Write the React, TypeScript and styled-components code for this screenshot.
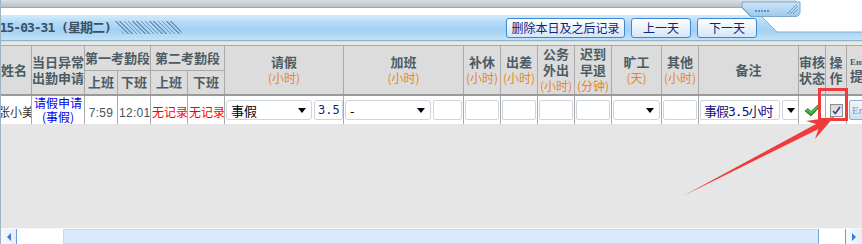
import React from 'react';
import styled, { createGlobalStyle } from 'styled-components';

const GlobalStyle = createGlobalStyle`
  html, body { margin: 0; padding: 0; background: #e6e6e6; }
  body { font-family: "Noto Sans CJK SC", "Noto Sans", sans-serif; }
  * { box-sizing: border-box; }
`;

const Frame = styled.div`
  position: relative;
  width: 862px;
  height: 244px;
  overflow: hidden;
  display: flex;
  flex-direction: column;
  background: #e6e6e6;
  border-left: 1px solid #9fb3c4;
`;

const Chrome = styled.div`
  height: 8px;
  flex: none;
  background: #fff;
  display: flex;
`;

const ChromeBar = styled.div`
  width: 797px;
  height: 8px;
  background: linear-gradient(#d9e0e5, #b6c2cb);
  border-bottom: 1px solid #98aab8;
  border-bottom-right-radius: 6px;
`;

const WhiteStrip = styled.div`
  height: 7px;
  flex: none;
  background: #fff;
`;

const TitleBar = styled.div`
  height: 26px;
  flex: none;
  display: flex;
  align-items: center;
  overflow: hidden;
  background: linear-gradient(#d3ebfb 0%, #b3dbf7 30%, #a4d0f2 60%, #c2e2f9 100%);
  border-bottom: 1px solid #8fb2cc;
  padding-right: 105px;
`;

const Title = styled.div`
  margin-left: -15px;
  font-size: 13px;
  font-weight: bold;
  line-height: 16px;
  color: #3b5063;
  white-space: nowrap;
  font-family: "DejaVu Sans Mono", "Noto Sans CJK SC", monospace;
  letter-spacing: -1px;
`;

const Hatch = styled.div`
  width: 68px;
  height: 13px;
  margin-left: 4px;
  background: repeating-linear-gradient(45deg, #6e97bb 0 1px, transparent 1px 3px);
  clip-path: polygon(0 0, 88% 0, 100% 100%, 12% 100%);
`;

const ButtonGroup = styled.div`
  margin-left: auto;
  display: flex;
  gap: 6px;
`;

const Btn = styled.button<{ $w: number }>`
  width: ${p => p.$w}px;
  height: 20px;
  padding: 0;
  border: 1px solid #3d88d2;
  border-radius: 3px;
  background: linear-gradient(#ffffff, #d3e6f7);
  color: #12237a;
  font-family: "Noto Sans CJK SC", sans-serif;
  font-size: 12px;
  line-height: 18px;
  white-space: nowrap;
`;

const Band = styled.div`
  height: 4px;
  flex: none;
  background: #e8e8e2;
  border-top: 1px solid #d4dadd;
`;

const TableArea = styled.div`
  flex: none;
  overflow: hidden;
  background: #e6e6e6;
`;

const Grid = styled.table`
  border-collapse: collapse;
  table-layout: fixed;
  width: 910px;
  margin-left: -5px;
`;

const HeadCell = styled.th<{ $h?: number }>`
  padding: 0;
  height: ${p => p.$h ?? 24}px;
  background: #dcdcdc;
  border: 1px solid #a9a9a9;
  color: #4c5c64;
  font-size: 13px;
  font-weight: bold;
  line-height: 16px;
  text-align: center;
  vertical-align: middle;
  overflow: hidden;
`;

const EmHead = styled(HeadCell)`
  text-align: left;
  padding-left: 3px;
`;

const EmSmall = styled.div`
  font-family: "Liberation Serif", serif;
  font-size: 9px;
  line-height: 12px;
  white-space: nowrap;
`;

const Unit = styled.div`
  color: #e8861c;
  font-weight: normal;
  font-size: 12px;
  line-height: 16px;
  white-space: nowrap;
`;

const HeadBottomRow = styled.tr`
  border-bottom: 2px solid #9a9a9a;
`;

const Cell = styled.td`
  padding: 0 1px;
  height: 28px;
  background: #fff;
  border-right: 1px solid #a9a9a9;
  border-left: 1px solid #a9a9a9;
  text-align: center;
  vertical-align: middle;
  overflow: hidden;
  white-space: nowrap;
`;

const NameCell = styled(Cell)`
  text-align: right;
  padding-right: 0;
`;

const Name = styled.span`
  font-size: 12px;
  color: #333;
`;

const Link = styled.a`
  display: block;
  color: #0000ee;
  font-size: 12px;
  line-height: 14px;
  text-decoration: none;
  white-space: normal;
`;

const Time = styled.span`
  font-family: "Liberation Sans", sans-serif;
  font-size: 12px;
  letter-spacing: 0.3px;
  color: #435561;
`;

const Missing = styled.span`
  font-size: 12px;
  color: #ff0000;
`;

const Wrap = styled.div<{ $justify?: string }>`
  display: flex;
  align-items: center;
  justify-content: ${p => p.$justify ?? 'center'};
  gap: 2px;
`;

const SelectBox = styled.div<{ $w: number }>`
  width: ${p => p.$w}px;
  height: 20px;
  flex: none;
  border: 1px solid #cdd5de;
  border-radius: 3px;
  background: #fff;
  display: flex;
  align-items: center;
  justify-content: space-between;
  padding: 0 5px 0 4px;
  font-size: 13px;
  color: #000;
`;

const Caret = styled.span`
  width: 0;
  height: 0;
  border-left: 4px solid transparent;
  border-right: 4px solid transparent;
  border-top: 5px solid #000;
  margin-left: auto;
`;

const Field = styled.input<{ $w: number }>`
  width: ${p => p.$w}px;
  height: 20px;
  flex: none;
  border: 1px solid #cdd5de;
  border-radius: 2px;
  background: #fff;
  padding: 0 3px;
  font-family: "DejaVu Sans Mono", monospace;
  font-size: 12px;
  color: #1a1a80;
  text-align: center;
  outline: none;
`;

const NoteField = styled(Field)`
  font-family: "DejaVu Sans Mono", "Noto Sans CJK SC", monospace;
  font-size: 13px;
  letter-spacing: -1px;
  text-align: left;
  color: #101080;
`;

const CaretBtn = styled.div`
  width: 17px;
  height: 20px;
  flex: none;
  border: 1px solid #cdd5de;
  border-radius: 2px;
  background: #fff;
  display: flex;
  align-items: center;
  justify-content: center;
`;

const CheckBox = styled.span`
  width: 13px;
  height: 13px;
  border: 1px solid #8e8e8e;
  background: linear-gradient(#d8d8d8, #f0f0f0);
  display: inline-flex;
  align-items: center;
  justify-content: center;
`;

const EmButton = styled.div`
  width: 40px;
  height: 20px;
  margin-left: 1px;
  border: 1px solid #8eb0d0;
  border-radius: 2px;
  background: linear-gradient(#f0f6fc, #cfe0f2);
  color: #9a9a9a;
  font-family: "Liberation Serif", serif;
  font-size: 11px;
  line-height: 18px;
  padding-left: 2px;
  text-align: left;
`;

const Filler = styled.div`
  flex: 1;
  background: #e6e6e6;
`;

const ScrollBar = styled.div`
  height: 16px;
  flex: none;
  display: flex;
  background: #fff;
  border-top: 1px solid #f4f8fc;
`;

const ScrollBtn = styled.div<{ $side: 'left' | 'right' }>`
  width: ${p => (p.$side === 'left' ? 16 : 17)}px;
  flex: none;
  display: flex;
  align-items: center;
  justify-content: center;
  background: linear-gradient(90deg, #f6f9fd, #e3eefa);
  ${p => (p.$side === 'left' ? 'border-right: 1px solid #6f9bd8;' : 'border-left: 1px solid #6f9bd8;')}
`;

const Tri = styled.span<{ $dir: 'left' | 'right' }>`
  width: 0;
  height: 0;
  border-top: 4px solid transparent;
  border-bottom: 4px solid transparent;
  ${p => (p.$dir === 'left' ? 'border-right: 4px solid #3d7ad0;' : 'border-left: 4px solid #3d7ad0;')}
`;

const Track = styled.div`
  flex: 1;
  display: flex;
  padding-left: 46px;
  padding-right: 26px;
`;

const Thumb = styled.div`
  flex: 1;
  background: #dae9fb;
  border: 1px solid #c3d9f1;
  border-right-color: #7aa6de;
`;

const Decoration = styled.svg`
  position: absolute;
  right: 0;
  top: 0;
  pointer-events: none;
`;

const Highlight = styled.div`
  position: absolute;
  left: 817px;
  top: 88px;
  width: 30px;
  height: 33px;
  border: 3px solid #ef3b3b;
  pointer-events: none;
`;

const ArrowLayer = styled.svg`
  position: absolute;
  left: -1px;
  top: 0;
  pointer-events: none;
`;

const cols = [35, 53, 33, 33, 37, 37, 119, 120, 37, 37, 37, 37, 50, 37, 100, 27, 21, 60];

const GreenCheck = () => (
  <svg width="17" height="13" viewBox="0 0 17 13">
    <path d="M1 7 L4 4.5 L7 7.5 L14 1 L16 2.5 L7 12 Z" fill="#34a52a" stroke="#1d6e17" strokeWidth="0.8" strokeLinejoin="round" />
    <path d="M2.5 7 L4 5.8 L7 8.6 L14 2.3" fill="none" stroke="#7fd46f" strokeWidth="0.8" />
  </svg>
);

const BlueTick = () => (
  <svg width="9" height="9" viewBox="0 0 9 9">
    <path d="M1 5 L3.3 7.5 L8 1" fill="none" stroke="#2a3fa8" strokeWidth="1.6" />
  </svg>
);

export default function App() {
  return (
    <>
      <GlobalStyle />
      <Frame>
        <Chrome>
          <ChromeBar />
        </Chrome>
        <WhiteStrip />
        <TitleBar>
          <Title>2015-03-31 (星期二)</Title>
          <Hatch />
          <ButtonGroup>
            <Btn $w={119}>删除本日及之后记录</Btn>
            <Btn $w={60}>上一天</Btn>
            <Btn $w={60}>下一天</Btn>
          </ButtonGroup>
        </TitleBar>
        <Band />
        <TableArea>
          <Grid>
            <colgroup>
              {cols.map((w, i) => (
                <col key={i} style={{ width: w }} />
              ))}
            </colgroup>
            <thead>
              <tr>
                <HeadCell rowSpan={2}>姓名</HeadCell>
                <HeadCell rowSpan={2}>当日异常出勤申请</HeadCell>
                <HeadCell colSpan={2}>第一考勤段</HeadCell>
                <HeadCell colSpan={2}>第二考勤段</HeadCell>
                <HeadCell rowSpan={2}>请假<Unit>(小时)</Unit></HeadCell>
                <HeadCell rowSpan={2}>加班<Unit>(小时)</Unit></HeadCell>
                <HeadCell rowSpan={2}>补休<Unit>(小时)</Unit></HeadCell>
                <HeadCell rowSpan={2}>出差<Unit>(小时)</Unit></HeadCell>
                <HeadCell rowSpan={2}>公务<br />外出<Unit>(小时)</Unit></HeadCell>
                <HeadCell rowSpan={2}>迟到<br />早退<Unit>(分钟)</Unit></HeadCell>
                <HeadCell rowSpan={2}>旷工<Unit>(天)</Unit></HeadCell>
                <HeadCell rowSpan={2}>其他<Unit>(小时)</Unit></HeadCell>
                <HeadCell rowSpan={2}>备注</HeadCell>
                <HeadCell rowSpan={2}>审核<br />状态</HeadCell>
                <HeadCell rowSpan={2}>操<br />作</HeadCell>
                <EmHead rowSpan={2}><EmSmall>Email</EmSmall>提醒</EmHead>
              </tr>
              <HeadBottomRow>
                <HeadCell>上班</HeadCell>
                <HeadCell>下班</HeadCell>
                <HeadCell>上班</HeadCell>
                <HeadCell>下班</HeadCell>
              </HeadBottomRow>
            </thead>
            <tbody>
              <tr>
                <NameCell><Name>张小美</Name></NameCell>
                <Cell><Link href="#">请假申请<br />(事假)</Link></Cell>
                <Cell><Time>7:59</Time></Cell>
                <Cell><Time>12:01</Time></Cell>
                <Cell><Missing>无记录</Missing></Cell>
                <Cell><Missing>无记录</Missing></Cell>
                <Cell>
                  <Wrap $justify="flex-start">
                    <SelectBox $w={86}>事假<Caret /></SelectBox>
                    <Field $w={29} readOnly value="3.5" />
                  </Wrap>
                </Cell>
                <Cell>
                  <Wrap $justify="flex-start">
                    <SelectBox $w={86}>-<Caret /></SelectBox>
                    <Field $w={29} readOnly value="" />
                  </Wrap>
                </Cell>
                <Cell><Wrap><Field $w={34} readOnly value="" /></Wrap></Cell>
                <Cell><Wrap><Field $w={34} readOnly value="" /></Wrap></Cell>
                <Cell><Wrap><Field $w={34} readOnly value="" /></Wrap></Cell>
                <Cell><Wrap><Field $w={34} readOnly value="" /></Wrap></Cell>
                <Cell><Wrap><SelectBox $w={47}><Caret /></SelectBox></Wrap></Cell>
                <Cell><Wrap><Field $w={34} readOnly value="" /></Wrap></Cell>
                <Cell>
                  <Wrap $justify="flex-start">
                    <NoteField $w={80} readOnly value="事假3.5小时" />
                    <CaretBtn><Caret style={{ marginLeft: 0 }} /></CaretBtn>
                  </Wrap>
                </Cell>
                <Cell><Wrap><GreenCheck /></Wrap></Cell>
                <Cell><Wrap><CheckBox><BlueTick /></CheckBox></Wrap></Cell>
                <Cell><Wrap $justify="flex-start"><EmButton>Email</EmButton></Wrap></Cell>
              </tr>
            </tbody>
          </Grid>
        </TableArea>
        <Filler />
        <ScrollBar>
          <ScrollBtn $side="left"><Tri $dir="left" /></ScrollBtn>
          <Track><Thumb /></Track>
          <ScrollBtn $side="right"><Tri $dir="right" /></ScrollBtn>
        </ScrollBar>

        <Decoration width="130" height="42" viewBox="732 0 130 42">
          <defs>
            <linearGradient id="tabg" x1="0" y1="0" x2="0" y2="1">
              <stop offset="0" stopColor="#cfe6f8" />
              <stop offset="1" stopColor="#9cc8ec" />
            </linearGradient>
          </defs>
          <polygon points="760,15 777,32 862,32 862,0 797,0 797,15" fill="#ffffff" />
          <polyline points="760,15 777,32 862,32" fill="none" stroke="#7eaed6" strokeWidth="1" />
          <path d="M742 7.5 L751 16.5 L795 16.5 Q800 16.5 800 11.5 L800 2 L742 2 Z" fill="url(#tabg)" stroke="#7aa6cf" strokeWidth="1" />
          <path d="M742 7.5 L751 16.5" stroke="#5d8fbd" strokeWidth="1" />
          <g fill="#5b92c8">
            <rect x="755" y="10" width="2" height="2" />
            <rect x="758" y="10" width="2" height="2" />
            <rect x="761" y="10" width="2" height="2" />
            <rect x="764" y="10" width="2" height="2" />
            <rect x="767" y="10" width="2" height="2" />
          </g>
          <g stroke="#6d9cc9" strokeWidth="1">
            <line x1="787" y1="14" x2="797" y2="4" />
            <line x1="790" y1="14" x2="798" y2="6" />
            <line x1="793" y1="14" x2="798" y2="9" />
          </g>
        </Decoration>

        <Highlight />
        <ArrowLayer width="862" height="244" viewBox="0 0 862 244">
          <polygon points="683,196 816,124 806,121 834,117 815,139 818.5,129" fill="#ef3b3b" />
        </ArrowLayer>
      </Frame>
    </>
  );
}
